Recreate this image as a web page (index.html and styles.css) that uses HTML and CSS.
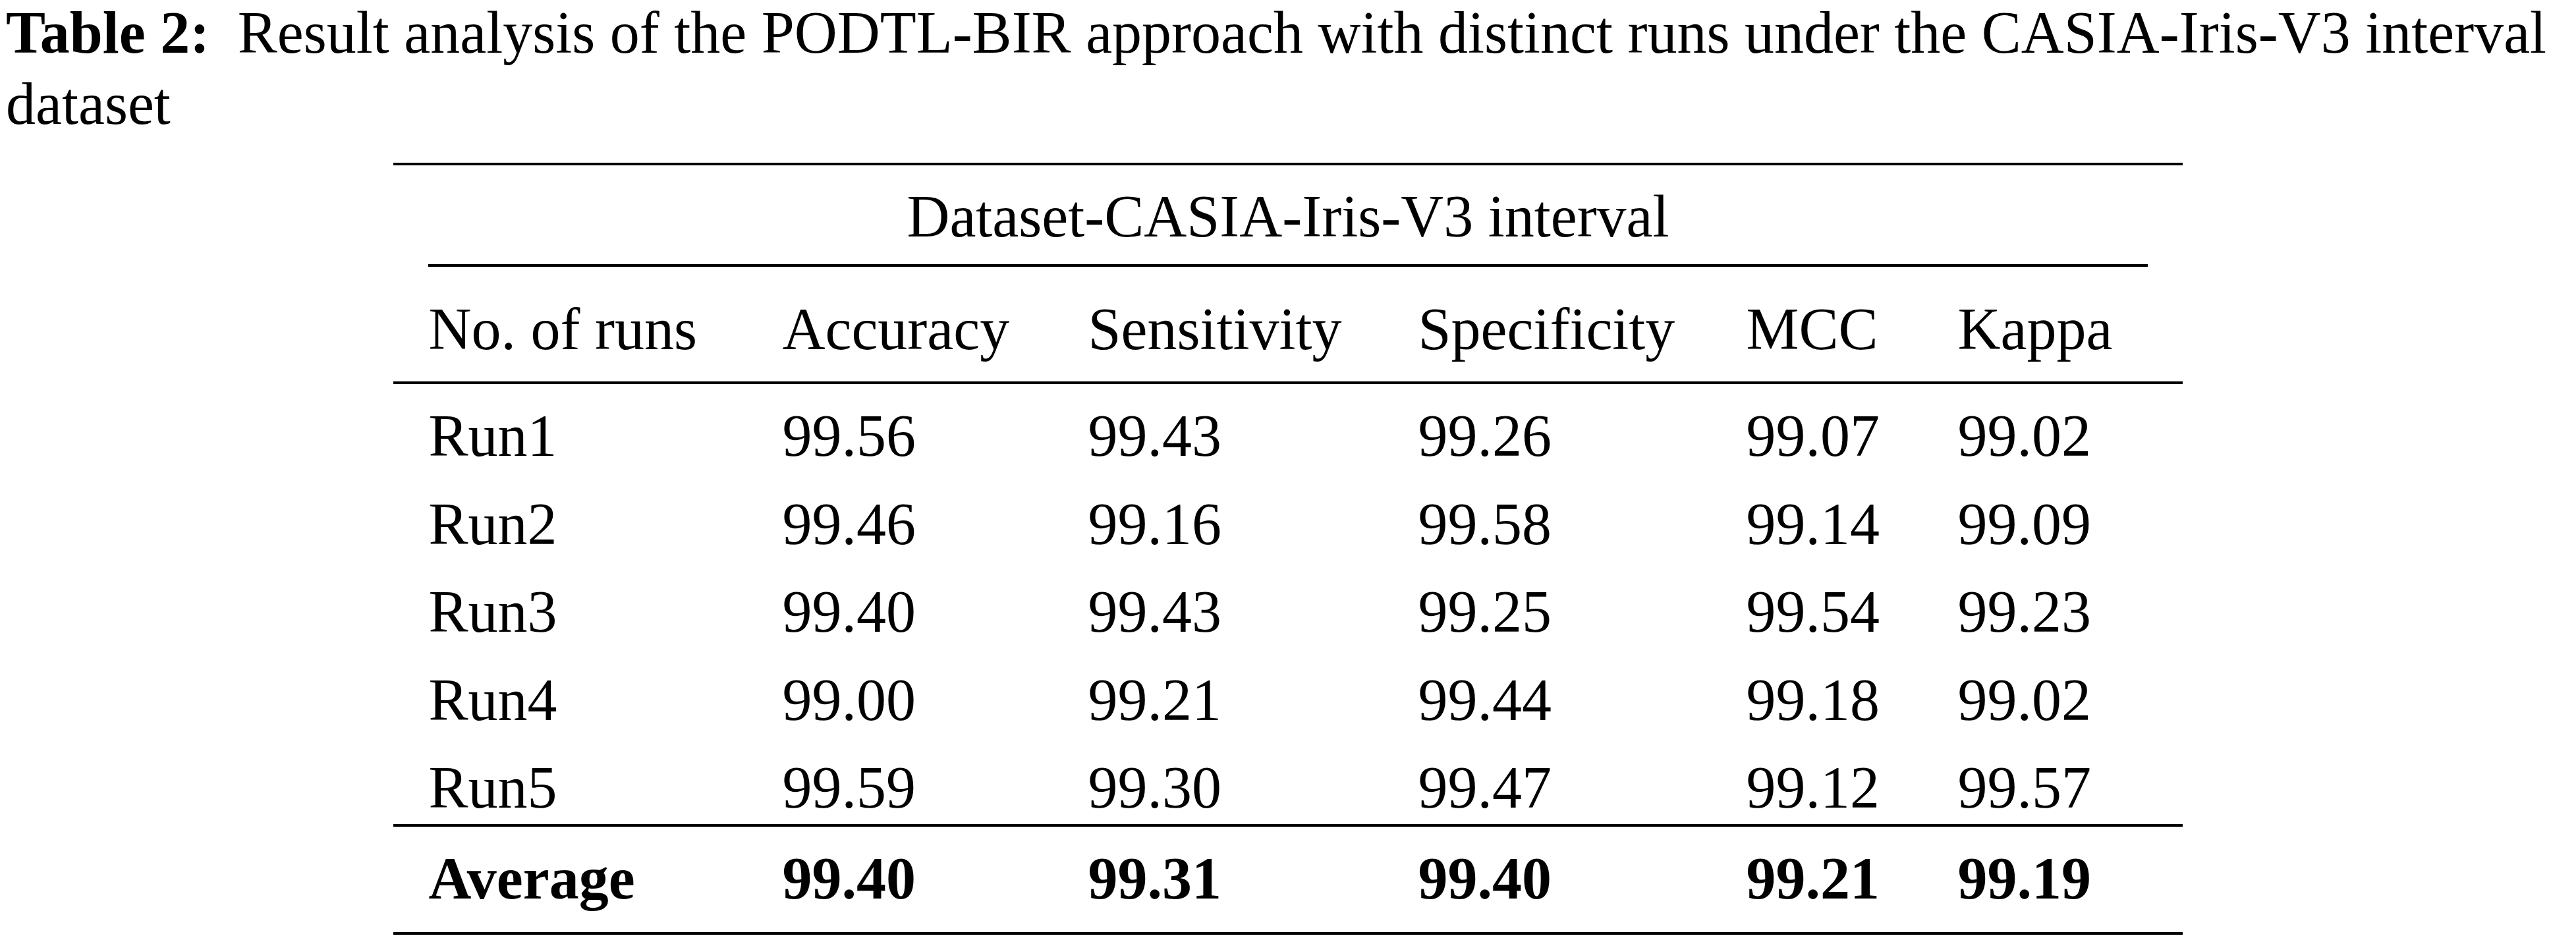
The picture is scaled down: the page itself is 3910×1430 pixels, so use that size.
FILE: index.html
```html
<!DOCTYPE html>
<html lang="en">
<head>
<meta charset="utf-8">
<title>Table 2</title>
<link rel="stylesheet" href="styles.css">
</head>
<body>
<div class="page">
  <p class="caption"><span class="label">Table 2:</span> Result analysis of the PODTL-BIR approach with distinct runs under the CASIA-Iris-V3 interval dataset</p>
  <table class="results">
    <colgroup>
      <col class="c1"><col class="c2"><col class="c3"><col class="c4"><col class="c5"><col class="c6">
    </colgroup>
    <thead>
      <tr class="span-row">
        <th colspan="6"><div class="span-title">Dataset-CASIA-Iris-V3 interval</div></th>
      </tr>
      <tr class="head-row">
        <th>No. of runs</th>
        <th>Accuracy</th>
        <th>Sensitivity</th>
        <th>Specificity</th>
        <th>MCC</th>
        <th>Kappa</th>
      </tr>
    </thead>
    <tbody>
      <tr class="data-row"><td>Run1</td><td>99.56</td><td>99.43</td><td>99.26</td><td>99.07</td><td>99.02</td></tr>
      <tr class="data-row"><td>Run2</td><td>99.46</td><td>99.16</td><td>99.58</td><td>99.14</td><td>99.09</td></tr>
      <tr class="data-row"><td>Run3</td><td>99.40</td><td>99.43</td><td>99.25</td><td>99.54</td><td>99.23</td></tr>
      <tr class="data-row"><td>Run4</td><td>99.00</td><td>99.21</td><td>99.44</td><td>99.18</td><td>99.02</td></tr>
      <tr class="data-row last"><td>Run5</td><td>99.59</td><td>99.30</td><td>99.47</td><td>99.12</td><td>99.57</td></tr>
      <tr class="avg-row"><td>Average</td><td>99.40</td><td>99.31</td><td>99.40</td><td>99.21</td><td>99.19</td></tr>
    </tbody>
  </table>
</div>
</body>
</html>
```

FILE: styles.css
```css
html, body {
  margin: 0;
  padding: 0;
  background: #ffffff;
}

.page {
  width: 3910px;
  height: 1430px;
  overflow: hidden;
  padding: 0 0 0 9px;
  box-sizing: border-box;
  font-family: "Liberation Serif", "Times New Roman", serif;
  font-size: 90px;
  color: #000000;
}

.caption {
  margin: -4px 0 35px 0;
  line-height: 108px;
}

.label {
  font-weight: bold;
  margin-right: 20px;
}

.results {
  width: 2715px;
  margin: 0 auto;
  position: relative;
  left: -4.5px;
  table-layout: fixed;
  border-collapse: separate;
  border-spacing: 0;
  border-top: 4px solid #000;
  border-bottom: 4px solid #000;
  line-height: 100px;
}

.c1 { width: 537px; }
.c2 { width: 464px; }
.c3 { width: 501px; }
.c4 { width: 498px; }
.c5 { width: 321px; }
.c6 { width: 394px; }

.results th,
.results td {
  text-align: left;
  font-weight: normal;
  padding: 0 0 0 53px;
  white-space: nowrap;
}

.span-row th {
  padding: 28px 53px 0 53px;
  text-align: center;
}

.span-title {
  padding-bottom: 22px;
  border-bottom: 4px solid #000;
}

.head-row th {
  padding-top: 45px;
  padding-bottom: 29px;
  border-bottom: 4px solid #000;
}

.data-row td {
  padding-top: 29px;
  padding-bottom: 4.5px;
}

.data-row.last td {
  border-bottom: 4px solid #000;
}

.avg-row td {
  font-weight: bold;
  padding-top: 29px;
  padding-bottom: 31px;
}
```
